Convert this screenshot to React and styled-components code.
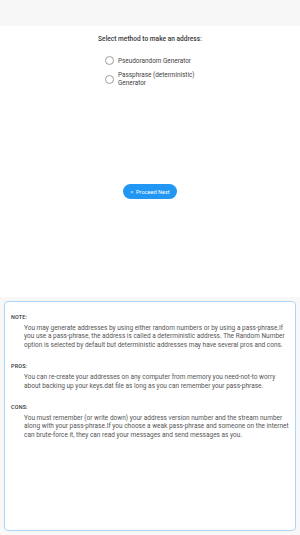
import React from 'react'
import styled, { createGlobalStyle } from 'styled-components'

const GlobalStyle = createGlobalStyle`
  html, body {
    margin: 0;
    padding: 0;
    background: #f8f8f8;
    font-family: Roboto, "Liberation Sans", sans-serif;
  }
`

const Page = styled.div`
  width: 300px;
  height: 535px;
  display: flex;
  flex-direction: column;
  background: #f8f8f8;
`

const TopBar = styled.div`
  height: 26px;
  background: #f7f7f7;
`

const Main = styled.div`
  height: 271px;
  background: #fff;
  display: flex;
  flex-direction: column;
  align-items: center;
  padding-top: 9px;
  box-sizing: border-box;
`

const Title = styled.div`
  font-size: 6.6px;
  font-weight: 500;
  color: #3a3a3a;
  line-height: 8px;
`

const RadioList = styled.div`
  display: flex;
  flex-direction: column;
  gap: 6px;
  margin-top: 13px;
  margin-left: 7px;
`

const RadioRow = styled.label`
  display: flex;
  align-items: center;
  gap: 4px;
`

const Circle = styled.span`
  width: 7px;
  height: 7px;
  border: 1px solid #9e9e9e;
  border-radius: 50%;
  flex-shrink: 0;
`

const RadioText = styled.span`
  width: 84px;
  font-size: 6.4px;
  line-height: 8px;
  color: #444;
`

const Button = styled.button`
  margin-top: 97px;
  height: 15px;
  padding: 0 7px;
  border: none;
  border-radius: 8px;
  background: #2196f3;
  color: #fff;
  font-family: Roboto, "Liberation Sans", sans-serif;
  font-size: 5.6px;
  display: flex;
  align-items: center;
  gap: 3px;
`

const PanelWrap = styled.div`
  flex: 1;
  padding: 4px;
  display: flex;
`

const Panel = styled.div`
  flex: 1;
  background: #fff;
  border: 1px solid #a8d6fc;
  border-radius: 4px;
  padding: 12px 6px 0 6px;
`

const Label = styled.div`
  font-size: 5.4px;
  font-weight: 500;
  color: #333;
  letter-spacing: 0.2px;
  margin-top: ${p => (p.first ? '0' : '14px')};
`

const Para = styled.p`
  margin: 4px 0 0 13px;
  font-size: 6.5px;
  line-height: 8.4px;
  color: #555;
`

export default function App() {
  return (
    <>
      <GlobalStyle />
      <Page>
        <TopBar />
        <Main>
          <Title>Select method to make an address:</Title>
          <RadioList>
            <RadioRow>
              <Circle />
              <RadioText>Pseudorandom Generator</RadioText>
            </RadioRow>
            <RadioRow>
              <Circle />
              <RadioText>Passphrase (deterministic) Generator</RadioText>
            </RadioRow>
          </RadioList>
          <Button>
            <span>»</span>
            <span>Proceed Next</span>
          </Button>
        </Main>
        <PanelWrap>
          <Panel>
            <Label first>NOTE:</Label>
            <Para>
              You may generate addresses by using either random numbers or by using a pass-phrase.If
              you use a pass-phrase, the address is called a deterministic address. The Random Number
              option is selected by default but deterministic addresses may have several pros and cons.
            </Para>
            <Label>PROS:</Label>
            <Para>
              You can re-create your addresses on any computer from memory you need-not-to worry
              about backing up your keys.dat file as long as you can remember your pass-phrase.
            </Para>
            <Label>CONS:</Label>
            <Para>
              You must remember (or write down) your address version number and the stream number
              along with your pass-phrase.If you choose a weak pass-phrase and someone on the internet
              can brute-force it, they can read your messages and send messages as you.
            </Para>
          </Panel>
        </PanelWrap>
      </Page>
    </>
  )
}
